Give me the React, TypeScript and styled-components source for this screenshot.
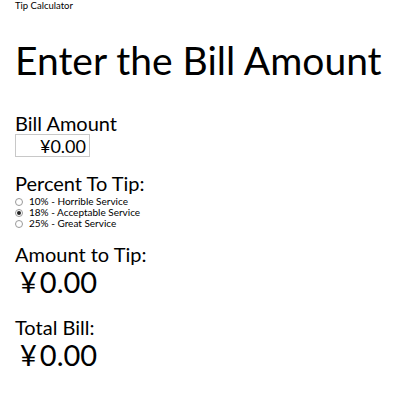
import React, { useState } from "react";
import styled, { createGlobalStyle } from "styled-components";

const Global = createGlobalStyle`
  html, body { margin: 0; padding: 0; background: #fff; }
  body { font-family: Lato, "Open Sans", sans-serif; color: #000; }
`;

const Page = styled.div`
  display: flex;
  flex-direction: column;
  padding: 0 0 0 15px;
`;

const AppTitle = styled.div`
  font-size: 9.5px;
  line-height: 12px;
`;

const Header = styled.h1`
  margin: 24px 0 0 0;
  font-size: 39px;
  font-weight: 400;
  line-height: 48px;
  white-space: nowrap;
`;

const Section = styled.div<{ $top: number }>`
  display: flex;
  flex-direction: column;
  margin-top: ${(p) => p.$top}px;
`;

const Label = styled.div`
  font-size: 20px;
  line-height: 22px;
`;

const AmountInput = styled.input`
  box-sizing: border-box;
  width: 75px;
  height: 23px;
  margin: 0;
  padding: 0 3px 0 0;
  border: 1px solid #c8c8c8;
  text-align: right;
  font-family: Lato, "Noto Sans CJK SC", sans-serif;
  font-size: 18px;
  color: #000;
  outline: none;
`;

const RadioList = styled.div`
  display: flex;
  flex-direction: column;
  margin-top: 2px;
`;

const RadioRow = styled.label`
  display: flex;
  align-items: center;
  gap: 6px;
  height: 11px;
  font-size: 10px;
  line-height: 11px;
`;

const Radio = styled.input`
  appearance: none;
  margin: 0;
  width: 8px;
  height: 8px;
  border: 1px solid #9a9a9a;
  border-radius: 50%;
  box-sizing: border-box;
  display: grid;
  place-items: center;
  &:checked::after {
    content: "";
    width: 4px;
    height: 4px;
    border-radius: 50%;
    background: #222;
  }
`;

const Result = styled.div`
  font-size: 29px;
  line-height: 34px;
  padding-left: 5px;
  font-family: Lato, "Noto Sans CJK SC", sans-serif;
`;

const Yen = styled.span`
  margin-right: 3px;
`;

const options = [
  { v: 10, t: "10% - Horrible Service" },
  { v: 18, t: "18% - Acceptable Service" },
  { v: 25, t: "25% - Great Service" },
];

export default function App() {
  const [bill, setBill] = useState("¥0.00");
  const [pct, setPct] = useState(18);
  return (
    <Page>
      <Global />
      <AppTitle>Tip Calculator</AppTitle>
      <Header>Enter the Bill Amount</Header>
      <Section $top={28}>
        <Label>Bill Amount</Label>
        <AmountInput value={bill} onChange={(e) => setBill(e.target.value)} />
      </Section>
      <Section $top={15}>
        <Label>Percent To Tip:</Label>
        <RadioList>
          {options.map((o) => (
            <RadioRow key={o.v}>
              <Radio
                type="radio"
                name="pct"
                checked={pct === o.v}
                onChange={() => setPct(o.v)}
              />
              {o.t}
            </RadioRow>
          ))}
        </RadioList>
      </Section>
      <Section $top={14}>
        <Label>Amount to Tip:</Label>
        <Result>
          <Yen>¥</Yen>0.00
        </Result>
      </Section>
      <Section $top={17}>
        <Label>Total Bill:</Label>
        <Result>
          <Yen>¥</Yen>0.00
        </Result>
      </Section>
    </Page>
  );
}
